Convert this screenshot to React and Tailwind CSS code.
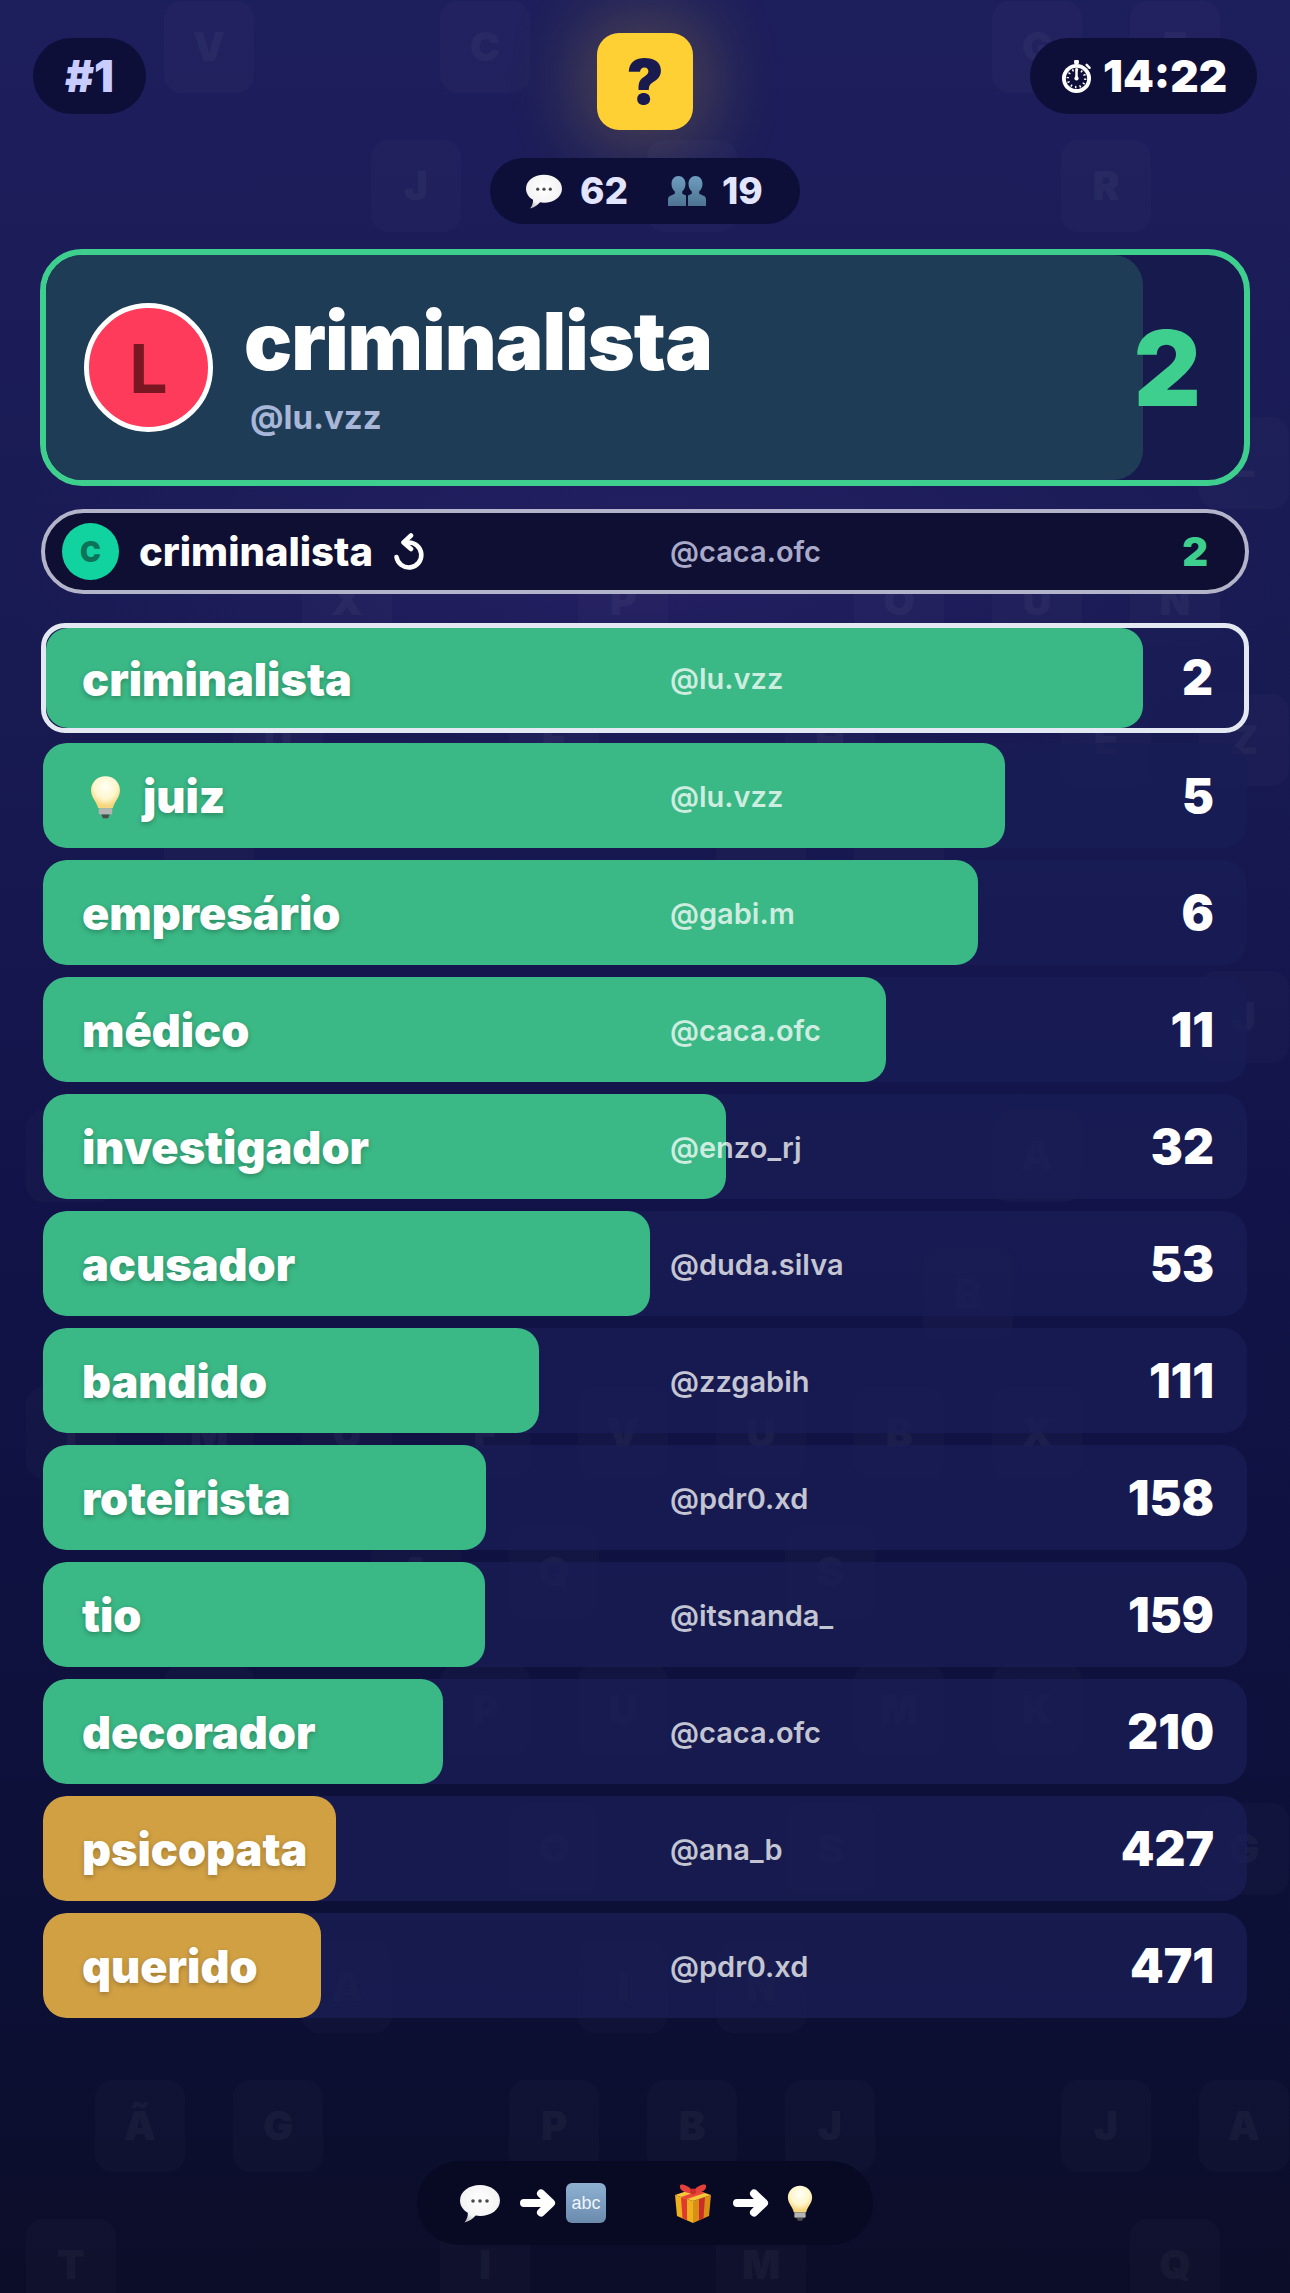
import { useId } from "react";

const rows = [
  { word: "criminalista", handle: "@lu.vzz", score: 2, bar: 1097, mine: true },
  { word: "juiz", handle: "@lu.vzz", score: 5, bar: 962, hint: true },
  { word: "empresário", handle: "@gabi.m", score: 6, bar: 935 },
  { word: "médico", handle: "@caca.ofc", score: 11, bar: 843 },
  { word: "investigador", handle: "@enzo_rj", score: 32, bar: 683 },
  { word: "acusador", handle: "@duda.silva", score: 53, bar: 607 },
  { word: "bandido", handle: "@zzgabih", score: 111, bar: 496 },
  { word: "roteirista", handle: "@pdr0.xd", score: 158, bar: 443 },
  { word: "tio", handle: "@itsnanda_", score: 159, bar: 442 },
  { word: "decorador", handle: "@caca.ofc", score: 210, bar: 400 },
  { word: "psicopata", handle: "@ana_b", score: 427, bar: 293, warm: true },
  { word: "querido", handle: "@pdr0.xd", score: 471, bar: 278, warm: true },
];

// faint letter tiles behind everything: [row, center x, letter]
const tiles = [
  [0, 209, "V"], [0, 485, "C"], [0, 1037, "G"], [0, 1175, "E"],
  [1, 416, "J"], [1, 692, "W"], [1, 1106, "R"],
  [3, 1244, "L"], [2, 899, "F"],
  [4, 347, "X"], [4, 623, "P"], [4, 899, "O"], [4, 1037, "U"], [4, 1175, "N"],
  [5, 278, "U"], [5, 554, "E"], [5, 830, "H"], [5, 1106, "E"], [5, 1244, "Z"],
  [6, 209, "A"], [6, 761, "F"], [6, 899, "H"],
  [7, 1244, "J"],
  [8, 71, "Y"], [8, 1037, "A"],
  [9, 968, "B"],
  [10, 71, "I"], [10, 209, "M"], [10, 347, "U"], [10, 485, "F"], [10, 623, "V"], [10, 761, "U"], [10, 899, "B"], [10, 1037, "X"],
  [11, 416, "A"], [11, 554, "Q"], [11, 830, "S"],
  [12, 485, "P"], [12, 623, "U"], [12, 899, "M"], [12, 1037, "K"], [12, 209, "D"],
  [13, 554, "O"], [13, 830, "S"], [13, 1244, "G"],
  [14, 347, "A"], [14, 623, "I"], [14, 761, "N"],
  [15, 140, "Ã"], [15, 278, "G"], [15, 554, "P"], [15, 692, "B"], [15, 830, "J"], [15, 1106, "J"], [15, 1244, "A"],
  [16, 71, "T"], [16, 485, "I"], [16, 761, "M"], [16, 1175, "Q"],
];

function Bubble({ className }) {
  const id = useId();
  return (
    <svg viewBox="0 0 40 40" className={className}>
      <defs>
        <radialGradient id={id} cx="50%" cy="40%" r="65%">
          <stop offset="0%" stopColor="#ffffff" />
          <stop offset="70%" stopColor="#f4f4f4" />
          <stop offset="100%" stopColor="#bdbdbd" />
        </radialGradient>
      </defs>
      <path d="M20 2C31 2 40 8.500 40 17.500S31 33 20 33c-1.500 0-3-.1-4.400-.4C13 35.500 9.500 38.500 4.500 39.500 7 36.500 8 33 7.800 29.800 3 27 0 22.600 0 17.500 0 8.500 9 2 20 2Z" fill={`url(#${id})`} />
      <circle cx="13" cy="18" r="1.800" fill="#4a4a4a" />
      <circle cx="20" cy="18" r="1.800" fill="#4a4a4a" />
      <circle cx="27" cy="18" r="1.800" fill="#4a4a4a" />
    </svg>
  );
}

function People({ className }) {
  const id = useId();
  return (
    <svg viewBox="0 0 38 32" className={className}>
      <defs>
        <linearGradient id={id} x1="0" y1="0" x2="0" y2="1">
          <stop offset="0%" stopColor="#6f9dbf" />
          <stop offset="100%" stopColor="#4d7391" />
        </linearGradient>
      </defs>
      <g fill={`url(#${id})`}>
        <path d="M10.500 1c4 0 7 3.200 7 7.800 0 3.400-1.300 6.200-3.300 7.700v2.300l3.800 1.700V31H0v-6.500c0-2 1-3 2.500-3.700l4.300-2v-2.300C4.800 15 3.500 12.200 3.500 8.800 3.500 4.200 6.500 1 10.500 1Z" />
        <path d="M27.500 1c4 0 7 3.200 7 7.800 0 3.400-1.300 6.200-3.300 7.700v2.300l4.300 2c1.500.7 2.500 1.700 2.500 3.700V31H20V20.500l3.800-1.700v-2.300c-2-1.500-3.300-4.300-3.300-7.700 0-4.600 3-7.800 7-7.800Z" />
      </g>
    </svg>
  );
}

function Bulb({ className }) {
  const id = useId();
  return (
    <svg viewBox="0 0 30 42" className={className}>
      <defs>
        <radialGradient id={id} cx="50%" cy="32%" r="60%">
          <stop offset="0%" stopColor="#fffff6" />
          <stop offset="65%" stopColor="#fff6cc" />
          <stop offset="100%" stopColor="#f5d67e" />
        </radialGradient>
      </defs>
      <path d="M15 1C23 1 29 7 29 14.500c0 7-5.500 11-7 17.500H8C6.500 25.500 1 21.500 1 14.500 1 7 7 1 15 1Z" fill={`url(#${id})`} />
      <rect x="8.500" y="32" width="13" height="6" rx="1.500" fill="#b4b4b4" />
      <path d="M11 38h8l-1.500 3.500h-5Z" fill="#4c4c4c" />
    </svg>
  );
}

function Gift({ className }) {
  return (
    <svg viewBox="0 0 40 40" className={className}>
      <path d="M2 12 20 18v22L4 33Z" fill="#eeb01f" />
      <path d="M38 12 20 18v22l16-7Z" fill="#d98f14" />
      <path d="M2 12 20 6l18 6-18 6Z" fill="#f7c73a" />
      <path d="M8 14.200 14 16.200V37.300L9.500 35.300Z" fill="#e0392f" />
      <path d="M32 14.200 26 16.200V37.300L30.500 35.300Z" fill="#c92f28" />
      <path d="M8 14 26 8l6 2-18 6Z" fill="#e9473a" />
      <path d="M20 8C15 2 8 0 7 2.500 6 6 10 10 20 10.500 30 10 34 6 33 2.500 32 0 25 2 20 8Z" fill="#e5403a" />
      <circle cx="20" cy="8.500" r="3" fill="#c72e2c" />
    </svg>
  );
}

function Abc({ className }) {
  return (
    <svg viewBox="0 0 40 40" className={className}>
      <defs>
        <linearGradient id="abcFill" x1="0" y1="0" x2="0" y2="1">
          <stop offset="0%" stopColor="#8eb1d2" />
          <stop offset="100%" stopColor="#6b8bad" />
        </linearGradient>
      </defs>
      <rect width="40" height="40" rx="6" fill="url(#abcFill)" />
      <text x="20" y="25.500" textAnchor="middle" fontSize="18" fill="#eef4fb" fontFamily="'Liberation Sans', sans-serif">abc</text>
    </svg>
  );
}

function Arrow({ className }) {
  return (
    <svg viewBox="0 0 36 28" className={className}>
      <path d="M4 14H30M21 4.500 31 14 21 23.500" fill="none" stroke="#ffffff" strokeWidth="8" strokeLinecap="round" strokeLinejoin="round" />
    </svg>
  );
}

function Timer({ className }) {
  return (
    <svg viewBox="0 0 32 34" className={className}>
      <rect x="13.500" y="0" width="5" height="4" rx="1" fill="#fff" />
      <circle cx="16" cy="19" r="15" fill="#fff" />
      <circle cx="16" cy="19" r="11" fill="#0e0f38" />
      <circle cx="16" cy="19" r="9" fill="none" stroke="#fff" strokeWidth="2.500" strokeDasharray="1.500 3.200" />
      <path d="M16 9.500V19" stroke="#fff" strokeWidth="2.600" strokeLinecap="round" />
      <circle cx="16" cy="19" r="2.200" fill="#fff" />
      <path d="m26.500 5 3 3" stroke="#fff" strokeWidth="2.500" strokeLinecap="round" />
    </svg>
  );
}

function Retry({ className }) {
  return (
    <svg viewBox="0 0 32 38" className={className}>
      <path d="M15 9.500A12.500 12.500 0 1 1 3.500 24" fill="none" stroke="#fff" strokeWidth="4.600" strokeLinecap="round" />
      <path d="M18 2.500 10.500 9.500 18 16" fill="none" stroke="#fff" strokeWidth="4.600" strokeLinecap="round" strokeLinejoin="round" />
    </svg>
  );
}

function GuessRow({ row }) {
  const shape = row.mine
    ? "h-[110px] -mx-[2px] -mb-[2px] border-[5px] border-[#e3e8f2] pl-[36px] pr-[31px]"
    : "h-[105px] pl-[39px] pr-[33px]";
  return (
    <div className={`relative flex items-center overflow-hidden rounded-[24px] bg-[#191d55]/75 ${shape}`}>
      <div
        className={`absolute inset-y-0 left-0 rounded-[22px] ${row.warm ? "bg-[#d1a043]" : "bg-[#3ab885]"}`}
        style={{ width: row.bar }}
      />
      <div className="relative flex w-[588px] items-center gap-[22px] pt-[2px] text-[45px] font-black leading-none text-white [text-shadow:0_2px_5px_rgba(0,0,0,0.25)]">
        {row.hint && <Bulb className="ml-[8px] h-[44px] w-[31px]" />}
        <span>{row.word}</span>
      </div>
      <span className="relative flex-1 pt-[2px] text-[29px] font-semibold text-white/75">{row.handle}</span>
      <span className="relative text-[48px] font-black leading-none text-white">{row.score}</span>
    </div>
  );
}

export default function App() {
  return (
    <div className="relative h-[2293px] w-[1290px] overflow-hidden bg-[radial-gradient(ellipse_640px_260px_at_50%_560px,rgba(60,40,130,0.3),transparent),linear-gradient(to_bottom,#1d1e5c_0%,#181a52_30%,#12144a_50%,#0c1036_85%,#0c0d28_100%)] font-[Inter,sans-serif]">
      {/* Letter tiles, scattered on the backdrop */}
      <div className="absolute inset-0">
        {tiles.map(([line, x, letter]) => (
          <div
            key={`${line}-${x}`}
            className="absolute flex h-[92px] w-[90px] items-center justify-center rounded-[18px] bg-white/[0.018] text-[40px] font-black text-white/[0.035]"
            style={{ left: x - 45, top: 1 + line * 138.6 }}
          >
            {letter}
          </div>
        ))}
      </div>

      <div className="relative">
        {/* Top bar */}
        <header className="grid grid-cols-[1fr_auto_1fr] items-start px-[33px] pt-[33px]">
          <div className="mt-[5px] flex h-[76px] w-[113px] items-center justify-center rounded-full bg-[#0e0f38] text-[44px] font-black text-[#c9ccff]">
            #1
          </div>
          <div className="flex flex-col items-center gap-[28px]">
            <div className="flex h-[97px] w-[96px] items-center justify-center rounded-[22px] bg-[#ffd033] text-[62px] font-black text-[#181a50] shadow-[0_0_70px_20px_rgba(255,208,51,0.2)]">
              ?
            </div>
            <div className="flex h-[66px] w-[310px] items-center rounded-full bg-[#0e0f38] pl-[36px] text-[37px] font-extrabold text-[#e3e5ff]">
              <Bubble className="h-[36px] w-[36px]" />
              <span className="ml-[18px] w-[88px]">62</span>
              <People className="h-[32px] w-[38px]" />
              <span className="ml-[16px]">19</span>
            </div>
          </div>
          <div className="mt-[5px] flex h-[76px] w-[227px] items-center gap-[11px] justify-self-end rounded-full bg-[#0e0f38] pl-[31px] text-[44px] font-black text-white">
            <Timer className="h-[33px] w-[31px]" />
            14:22
          </div>
        </header>

        {/* Current best guess */}
        <section className="relative mx-[40px] mt-[25px] flex h-[237px] items-center overflow-hidden rounded-[42px] border-[6px] border-[#3ecf8e] bg-[#171a4d] pl-[38px] pr-[43px]">
          <div className="absolute inset-y-0 left-0 w-[1097px] rounded-r-[30px] bg-[#1f3c56]" />
          <div className="relative flex h-[129px] w-[129px] items-center justify-center rounded-full border-[5px] border-white bg-[#ff3b5c] text-[68px] font-bold text-[#7a1522]">
            L
          </div>
          <div className="relative ml-[31px] flex flex-1 flex-col">
            <span className="text-[80px] font-black leading-none tracking-[-1px] text-white">criminalista</span>
            <span className="ml-[6px] mt-[20px] text-[33px] font-bold leading-none text-[#a8b6d8]">@lu.vzz</span>
          </div>
          <span className="relative text-[104px] font-black leading-none text-[#3ecf8e]">2</span>
        </section>

        {/* Last guess */}
        <section className="mx-[41px] mt-[23px] flex h-[85px] items-center rounded-full border-4 border-[#b3b3ca] bg-[#0f0f33] pl-[17px] pr-[37px]">
          <div className="flex h-[57px] w-[57px] items-center justify-center rounded-full bg-[#10d3a0] text-[28px] font-black text-[#0c7358]">
            C
          </div>
          <div className="ml-[20px] flex w-[531px] items-center gap-[20px] text-[40px] font-extrabold leading-none text-white">
            criminalista
            <Retry className="h-[38px] w-[32px]" />
          </div>
          <span className="flex-1 text-[29px] font-semibold text-[#a9a9c8]">@caca.ofc</span>
          <span className="text-[40px] font-black leading-none text-[#3ecf8e]">2</span>
        </section>

        {/* Ranked guesses */}
        <section className="mx-[43px] mt-[29px] flex flex-col gap-[12px]">
          {rows.map((row) => (
            <GuessRow key={row.word} row={row} />
          ))}
        </section>

        {/* Hint legend */}
        <footer className="mx-auto mt-[143px] flex h-[84px] w-[456px] items-center rounded-full bg-[#080a24] pl-[43px]">
          <Bubble className="h-[40px] w-[40px]" />
          <Arrow className="ml-[20px] h-[28px] w-[36px]" />
          <Abc className="ml-[10px] h-[40px] w-[40px]" />
          <Gift className="ml-[67px] h-[40px] w-[40px]" />
          <Arrow className="ml-[20px] h-[28px] w-[36px]" />
          <Bulb className="ml-[18px] h-[40px] w-[26px]" />
        </footer>
      </div>
    </div>
  );
}
